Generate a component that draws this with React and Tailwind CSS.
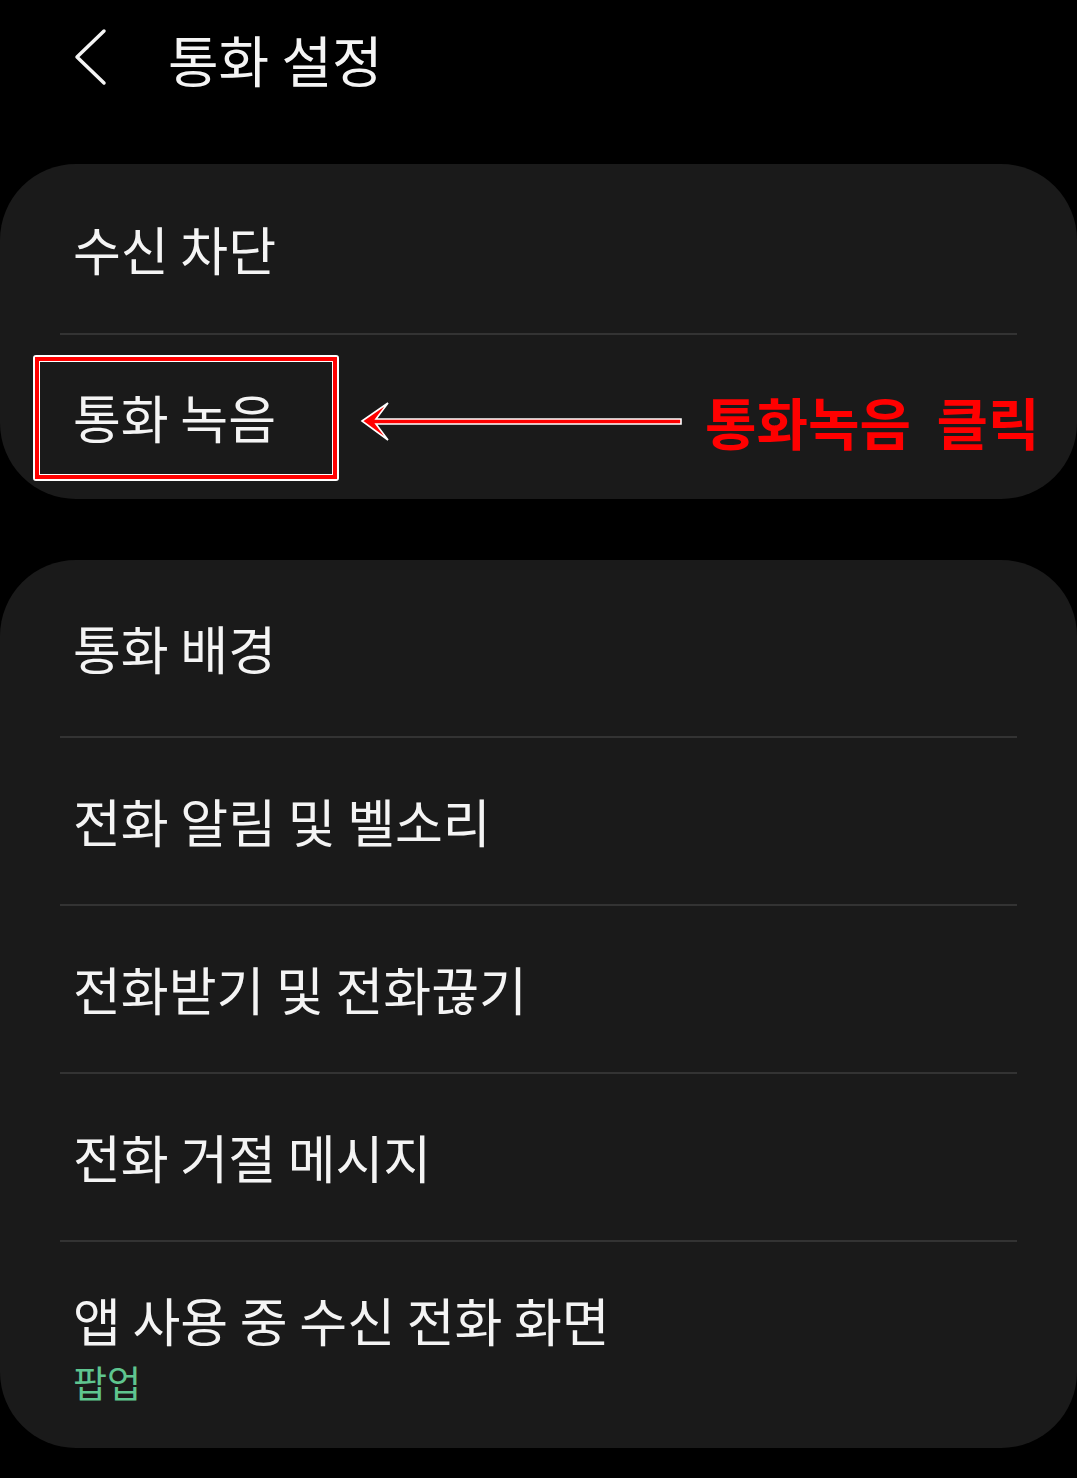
import React from "react";

const FONT = { fontFamily: '"Noto Sans CJK KR", "Noto Sans", sans-serif' };

function Divider() {
  return <div className="mx-[60px] h-[2px] bg-[#333333]" />;
}

function Row({ children, h }) {
  return (
    <div className={`flex items-center pl-[73px] ${h}`}>
      <span className="text-[52px] leading-[64px] text-[#f4f4f4]">{children}</span>
    </div>
  );
}

export default function App() {
  return (
    <div className="min-h-[1478px] w-[1077px] bg-black" style={FONT}>
      {/* header */}
      <div className="flex h-[116px] items-center">
        <div className="ml-[74px] flex w-[94px] items-center">
          <svg width="36" height="60" viewBox="0 0 36 60">
            <polyline
              points="30,3 3,29 30,55"
              fill="none"
              stroke="#f4f4f4"
              strokeWidth="3.5"
              strokeLinecap="round"
              strokeLinejoin="round"
            />
          </svg>
        </div>
        <span className="text-[55px] leading-[64px] text-[#f4f4f4]">통화 설정</span>
      </div>

      <div className="h-[48px]" />

      {/* card 1 */}
      <div className="rounded-[76px] bg-[#1a1a1a]">
        <Row h="h-[169px]">수신 차단</Row>
        <Divider />
        <div className="relative flex h-[164px] items-center pl-[73px]">
          <span className="text-[52px] leading-[64px] text-[#f4f4f4]">통화 녹음</span>

          {/* highlight box */}
          <div className="absolute left-[33px] top-[20px] h-[126px] w-[306px] rounded-[3px] border-2 border-white">
            <div className="h-full w-full border-[4px] border-[#ff0000]">
              <div className="h-full w-full border border-white" />
            </div>
          </div>

          {/* arrow */}
          <svg
            className="absolute left-[355px] top-[63px]"
            width="332"
            height="48"
            viewBox="355 398 332 48"
          >
            <path
              d="M362,421 L388,403 L376,419 L681,419 L681,424 L376,424 L388,440 Z"
              fill="#ff0000"
              stroke="#ffffff"
              strokeWidth="1.6"
              strokeLinejoin="miter"
            />
          </svg>

          {/* annotation text */}
          <span className="absolute left-[705px] top-[56px] whitespace-pre text-[56px] font-bold leading-[60px] text-[#ff0000]">
            통화녹음  클릭
          </span>
        </div>
      </div>

      <div className="h-[61px]" />

      {/* card 2 */}
      <div className="rounded-[76px] bg-[#1a1a1a]">
        <Row h="h-[176px]">통화 배경</Row>
        <Divider />
        <Row h="h-[166px]">전화 알림 및 벨소리</Row>
        <Divider />
        <Row h="h-[166px]">전화받기 및 전화끊기</Row>
        <Divider />
        <Row h="h-[166px]">전화 거절 메시지</Row>
        <Divider />
        <div className="flex h-[206px] flex-col pl-[73px] pt-[46px]">
          <span className="text-[52px] leading-[64px] text-[#f4f4f4]">앱 사용 중 수신 전화 화면</span>
          <span className="mt-[8px] text-[37px] leading-[44px] text-[#5fc58f]">팝업</span>
        </div>
      </div>
    </div>
  );
}
